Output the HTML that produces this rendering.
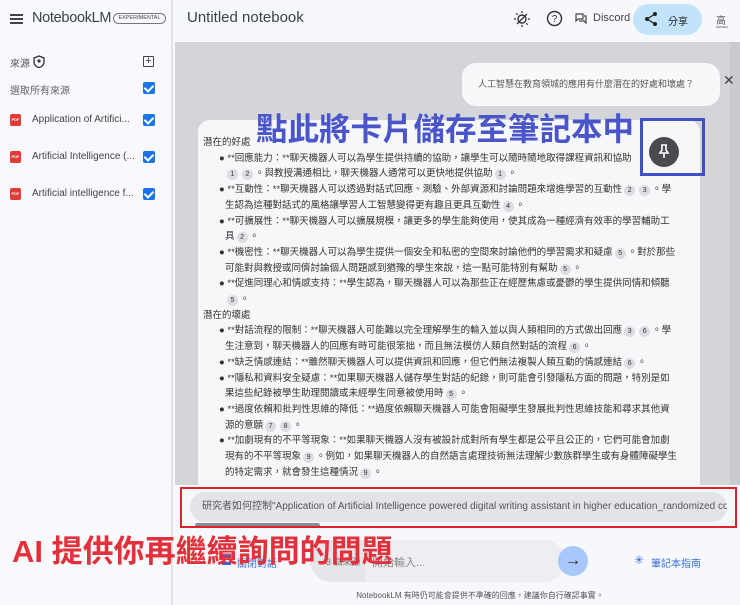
<!DOCTYPE html>
<html><head><meta charset="utf-8"><style>
*{margin:0;padding:0;box-sizing:border-box}
body{width:740px;height:605px;overflow:hidden;background:#f6f8fb;font-family:"Liberation Sans","Noto Sans CJK TC",sans-serif;position:relative;color:#333}
.abs{position:absolute}
.side{left:0;top:0;width:173px;height:605px;background:#f7f9fc;border-right:2px solid #e0e2e5}
.cb{position:absolute;left:143px;width:12px;height:12px;background:#1a73e8;border-radius:2px}
.cb:after{content:"";position:absolute;left:3px;top:1px;width:4px;height:7px;border:solid #fff;border-width:0 2px 2px 0;transform:rotate(45deg)}
.pdf{position:absolute;left:10px;width:11px;height:12px;background:#e53935;border-radius:2px;color:#fff;font-size:4px;line-height:12px;text-align:center;font-weight:bold}
.src{position:absolute;left:32px;font-size:10px;color:#444}
.main{left:175px;top:42px;width:565px;height:443px;background:#d3d5d9}
.card{left:198px;top:120px;width:502px;height:380px;background:#f6f7f9;border-radius:12px}
.txt{left:203px;top:135px;width:500px;font-size:9.5px;line-height:15.7px;color:#333;font-family:"Liberation Sans","Noto Sans CJK TC",sans-serif;white-space:nowrap}
.txt p{margin:0}
.li{padding-left:22px;text-indent:-6px}
.c{display:inline-block;width:11px;height:11px;border-radius:50%;background:#dcdde0;font-size:7px;line-height:11px;text-align:center;text-indent:0;margin:0 2px}
</style></head><body>
<div class="abs side"></div>
<div class="abs" style="left:10px;top:14px;width:13px;height:2px;background:#444;box-shadow:0 4px 0 #444,0 8px 0 #444"></div>
<div class="abs" style="left:32px;top:10px;font-size:14.5px;color:#3c4043;letter-spacing:-0.3px">NotebookLM</div>
<div class="abs" style="left:113px;top:13px;width:53px;height:11px;border:1px solid #777;border-radius:6px;font-size:5.5px;line-height:9px;text-align:center;color:#444">EXPERIMENTAL</div>
<div class="abs" style="left:187px;top:9px;font-size:15px;color:#3c4043">Untitled notebook</div>
<div class="abs" style="left:10px;top:55px;font-size:10px;color:#555">來源</div>
<svg class="abs" style="left:33px;top:55px" width="12" height="13" viewBox="0 0 12 13"><path d="M6 1L1 3v4c0 3 2.5 5 5 5.5 2.5-.5 5-2.5 5-5.5V3z" fill="none" stroke="#333" stroke-width="1.3"/><circle cx="6" cy="6" r="1.6" fill="#333"/></svg>
<div class="abs" style="left:143px;top:56px;width:11px;height:11px;border:1.3px solid #444;border-radius:1px;font-size:11px;line-height:8px;text-align:center">+</div>
<div class="abs" style="left:10px;top:82px;font-size:10px;color:#666">選取所有來源</div>
<div class="cb" style="top:82px"></div>
<div class="pdf" style="top:114px">PDF</div><div class="src" style="top:114px">Application of Artifici...</div><div class="cb" style="top:114px"></div>
<div class="pdf" style="top:151px">PDF</div><div class="src" style="top:151px">Artificial Intelligence (...</div><div class="cb" style="top:151px"></div>
<div class="pdf" style="top:188px">PDF</div><div class="src" style="top:188px">Artificial intelligence f...</div><div class="cb" style="top:188px"></div>

<svg class="abs" style="left:513px;top:10px" width="18" height="18" viewBox="0 0 18 18"><circle cx="9" cy="9" r="4" fill="none" stroke="#333" stroke-width="1.4"/><path d="M4 14L14 4M9 1v2M9 15v2M1 9h2M15 9h2M3.3 3.3l1.4 1.4M13.3 13.3l1.4 1.4" stroke="#333" stroke-width="1.3"/></svg>
<svg class="abs" style="left:546px;top:10px" width="17" height="17" viewBox="0 0 17 17"><circle cx="8.5" cy="8.5" r="7" fill="none" stroke="#333" stroke-width="1.4"/><text x="8.5" y="12" font-size="10" text-anchor="middle" fill="#333" font-family="Liberation Sans">?</text></svg>
<svg class="abs" style="left:575px;top:13px" width="12" height="11" viewBox="0 0 12 11"><path d="M1 1h7v5H3L1 8z M9 3h2v7l-2-2H4" fill="none" stroke="#444" stroke-width="1.2"/></svg>
<div class="abs" style="left:593px;top:12px;font-size:11px;color:#444">Discord</div>
<div class="abs" style="left:633px;top:4px;width:69px;height:31px;border-radius:16px;background:#c2e4fb"></div>
<svg class="abs" style="left:644px;top:11px" width="14" height="16" viewBox="0 0 14 16"><circle cx="11" cy="3" r="2" fill="#222"/><circle cx="3" cy="8" r="2" fill="#222"/><circle cx="11" cy="13" r="2" fill="#222"/><path d="M11 3L3 8l8 5" fill="none" stroke="#222" stroke-width="1.3"/></svg>
<div class="abs" style="left:668px;top:13px;font-size:10px;color:#222">分享</div>
<div class="abs" style="left:716px;top:12px;font-size:10px;color:#555">高</div>
<div class="abs" style="left:716px;top:25px;font-size:3px;color:#555">DEPEEA</div>

<div class="abs main"></div>
<div class="abs" style="left:730px;top:42px;width:10px;height:443px;background:#c9cbcf"></div>
<div class="abs" style="left:462px;top:63px;width:258px;height:43px;background:#f7f8fa;border-radius:14px;font-size:9px;line-height:43px;color:#555;padding-left:16px">人工智慧在教育領城的應用有什麼潛在的好處和壞處？</div>
<div class="abs" style="left:723px;top:72px;font-size:14px;color:#444">✕</div>

<div class="abs card"></div>
<div class="abs txt">
<p>潛在的好處</p>
<p class="li">● **回應能力：**聊天機器人可以為學生提供持續的協助，讓學生可以隨時隨地取得課程資訊和協助<br><span class="c">1</span><span class="c">2</span>。與教授溝通相比，聊天機器人通常可以更快地提供協助<span class="c">1</span>。</p>
<p class="li">● **互動性：**聊天機器人可以透過對話式回應、測驗、外部資源和討論問題來增進學習的互動性<span class="c">2</span><span class="c">3</span>。學<br>生認為這種對話式的風格讓學習人工智慧變得更有趣且更具互動性<span class="c">4</span>。</p>
<p class="li">● **可擴展性：**聊天機器人可以擴展規模，讓更多的學生能夠使用，使其成為一種經濟有效率的學習輔助工<br>具<span class="c">2</span>。</p>
<p class="li">● **機密性：**聊天機器人可以為學生提供一個安全和私密的空間來討論他們的學習需求和疑慮<span class="c">5</span>。對於那些<br>可能對與教授或同儕討論個人問題感到猶豫的學生來說，這一點可能特別有幫助<span class="c">5</span>。</p>
<p class="li">● **促進同理心和情感支持：**學生認為，聊天機器人可以為那些正在經歷焦慮或憂鬱的學生提供同情和傾聽<br><span class="c">5</span>。</p>
<p>潛在的壞處</p>
<p class="li">● **對話流程的限制：**聊天機器人可能難以完全理解學生的輸入並以與人類相同的方式做出回應<span class="c">3</span><span class="c">6</span>。學<br>生注意到，聊天機器人的回應有時可能很笨拙，而且無法模仿人類自然對話的流程<span class="c">6</span>。</p>
<p class="li">● **缺乏情感連結：**雖然聊天機器人可以提供資訊和回應，但它們無法複製人類互動的情感連結<span class="c">6</span>。</p>
<p class="li">● **隱私和資料安全疑慮：**如果聊天機器人儲存學生對話的紀錄，則可能會引發隱私方面的問題，特別是如<br>果這些紀錄被學生助理閱讀或未經學生同意被使用時<span class="c">5</span>。</p>
<p class="li">● **過度依賴和批判性思維的降低：**過度依賴聊天機器人可能會阻礙學生發展批判性思維技能和尋求其他資<br>源的意願<span class="c">7</span><span class="c">8</span>。</p>
<p class="li">● **加劇現有的不平等現象：**如果聊天機器人沒有被設計成對所有學生都是公平且公正的，它們可能會加劇<br>現有的不平等現象<span class="c">9</span>。例如，如果聊天機器人的自然語言處理技術無法理解少數族群學生或有身體障礙學生<br>的特定需求，就會發生這種情況<span class="c">9</span>。</p>
</div>
<div class="abs" style="left:700px;top:120px;width:30px;height:365px;background:#d3d5d9"></div>

<div class="abs" style="left:175px;top:485px;width:565px;height:120px;background:#f6f8fb"></div>
<div class="abs" style="left:190px;top:492px;width:537px;height:30px;border-radius:15px;background:#e2e4e7;font-size:10px;line-height:30px;color:#555;padding-left:12px;white-space:nowrap;overflow:hidden">研究者如何控制"Application of Artificial Intelligence powered digital writing assistant in higher education_randomized co</div>
<div class="abs" style="left:195px;top:523px;width:125px;height:5px;border-radius:3px;background:#8a8c90"></div>
<div class="abs" style="left:180px;top:487px;width:557px;height:41px;border:2.5px solid #e0202a"></div>

<div class="abs" style="left:310px;top:540px;width:255px;height:42px;border-radius:21px;background:#e4e6e9"></div>
<div class="abs" style="left:365px;top:540px;width:200px;height:42px;border-radius:0 21px 21px 0;background:#eceef1"></div>
<div class="abs" style="left:326px;top:555px;font-size:9px;color:#777">3 個來源</div>
<div class="abs" style="left:372px;top:554px;font-size:11px;color:#888">開始輸入...</div>
<div class="abs" style="left:558px;top:546px;width:30px;height:30px;border-radius:50%;background:#a8c7fa;text-align:center;line-height:29px;font-size:16px;color:#222">→</div>
<div class="abs" style="left:222px;top:555px;width:9px;height:10px;border-top:3px solid #3367d6;border-bottom:3px solid #3367d6"></div>
<div class="abs" style="left:237px;top:555px;font-size:10px;color:#3a6fd8">關閉對話</div>
<div class="abs" style="left:634px;top:553px;font-size:12px;color:#3a6fd8">✳</div>
<div class="abs" style="left:651px;top:555px;font-size:10px;color:#3a6fd8">筆記本指南</div>
<div class="abs" style="left:320px;top:590px;width:320px;text-align:center;font-size:8px;color:#555">NotebookLM 有時仍可能會提供不準確的回應，建議你自行確認事實。</div>

<div class="abs" style="left:12px;top:526px;font-size:31px;font-weight:bold;color:#e3313b;white-space:nowrap;font-family:'Liberation Sans','Noto Sans CJK TC',sans-serif">AI 提供你再繼續詢問的問題</div>
<div class="abs" style="left:256px;top:104px;font-size:31.5px;font-weight:bold;color:#4a55c9;white-space:nowrap;font-family:'Liberation Sans','Noto Sans CJK TC',sans-serif">點此將卡片儲存至筆記本中</div>
<div class="abs" style="left:640px;top:118px;width:65px;height:58px;border:3px solid #4150c8"></div>
<div class="abs" style="left:649px;top:137px;width:30px;height:30px;border-radius:50%;background:#4a494f"></div>
<svg class="abs" style="left:658px;top:144px" width="12" height="15" viewBox="0 0 12 15"><path d="M3 1h6M4 1v5L2 9h8L8 6V1M6 9v5" fill="none" stroke="#fff" stroke-width="1.6"/></svg>
</body></html>
